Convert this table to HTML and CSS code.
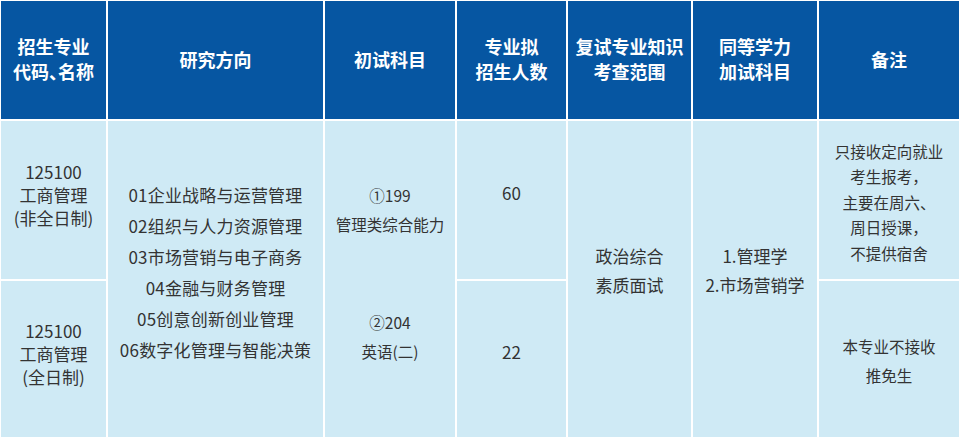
FILE: index.html
```html
<!DOCTYPE html>
<html lang="zh-CN">
<head>
<meta charset="utf-8">
<title>招生专业目录</title>
<link rel="stylesheet" href="styles.css">
</head>
<body>
<div class="table">
  <div class="th h1"><div>招生专业<br>代码<span class="pun">、</span>名称</div></div>
  <div class="th h2"><div>研究方向</div></div>
  <div class="th h3"><div>初试科目</div></div>
  <div class="th h4"><div>专业拟<br>招生人数</div></div>
  <div class="th h5"><div>复试专业知识<br>考查范围</div></div>
  <div class="th h6"><div>同等学力<br>加试科目</div></div>
  <div class="th h7"><div>备注</div></div>

  <div class="td code top"><div>125100<br>工商管理<br>(非全日制)</div></div>
  <div class="td code bottom"><div>125100<br>工商管理<br>(全日制)</div></div>

  <div class="td dirs">
    <div>01企业战略与运营管理</div>
    <div>02组织与人力资源管理</div>
    <div>03市场营销与电子商务</div>
    <div>04金融与财务管理</div>
    <div>05创意创新创业管理</div>
    <div>06数字化管理与智能决策</div>
  </div>

  <div class="td exams">
    <div class="exam"><div>①199</div><div>管理类综合能力</div></div>
    <div class="exam"><div>②204</div><div>英语(二)</div></div>
  </div>

  <div class="td num top"><div>60</div></div>
  <div class="td num bottom"><div>22</div></div>

  <div class="td retest"><div>政治综合<br>素质面试</div></div>
  <div class="td extra"><div>1.管理学<br>2.市场营销学</div></div>

  <div class="td note top"><div>只接收定向就业<br>考生报考，<br>主要在周六、<br>周日授课，<br>不提供宿舍</div></div>
  <div class="td note2 bottom"><div>本专业不接收<br>推免生</div></div>
</div>
</body>
</html>
```

FILE: styles.css
```css
html, body {
  margin: 0;
  padding: 0;
  background: #ffffff;
}

body {
  font-family: "Noto Sans CJK SC", "Noto Sans", sans-serif;
  color: #333333;
}

.table {
  width: 960px;
  box-sizing: border-box;
  display: grid;
  grid-template-columns: 105px 215px 130px 109px 123px 124px 140px;
  grid-template-rows: 118px 158px 156px;
  gap: 2px;
  padding: 1px;
  background: #ffffff;
}

.th {
  background: #0656a2;
  color: #ffffff;
  font-weight: 700;
  font-size: 18px;
  line-height: 25px;
  display: flex;
  align-items: center;
  justify-content: center;
  text-align: center;
  padding-bottom: 2px;
}

.pun {
  letter-spacing: -0.5em;
}

.td {
  background: #cfeaf5;
  display: flex;
  align-items: center;
  justify-content: center;
  text-align: center;
  font-size: 17px;
  box-sizing: border-box;
}

.top { grid-row: 2; }
.bottom { grid-row: 3; }

.code {
  grid-column: 1;
  line-height: 23px;
  padding-bottom: 11px;
}

.dirs {
  grid-column: 2;
  grid-row: 2 / 4;
  flex-direction: column;
  line-height: 31px;
  letter-spacing: 0.2px;
  padding-bottom: 15px;
}

.exams {
  grid-column: 3;
  grid-row: 2 / 4;
  flex-direction: column;
  gap: 69px;
  font-size: 15.5px;
  line-height: 29px;
  padding-bottom: 12px;
}

.num {
  grid-column: 4;
  padding-bottom: 16px;
}

.retest {
  grid-column: 5;
  grid-row: 2 / 4;
  line-height: 29px;
  padding-bottom: 18px;
}

.extra {
  grid-column: 6;
  grid-row: 2 / 4;
  line-height: 29px;
  padding-bottom: 18px;
}

.note {
  grid-column: 7;
  font-size: 15.5px;
  line-height: 25.5px;
  padding-top: 5px;
}

.note2 {
  grid-column: 7;
  font-size: 15.5px;
  line-height: 29px;
  padding-top: 4px;
}
```
